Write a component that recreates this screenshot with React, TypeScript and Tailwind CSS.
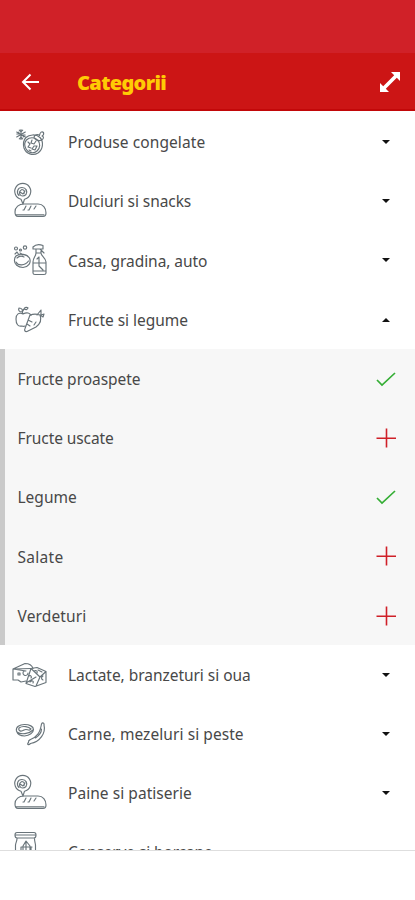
import { useState, type ReactNode } from 'react';

type Sub = { name: string; added: boolean; tracking: string };
type Category = { name: string; icon: ReactNode; tracking: string; subs?: Sub[] };

const Drawing = ({ children }: { children: ReactNode }) => (
  <svg
    className="w-9 h-9 shrink-0 overflow-visible text-[#69747a]"
    viewBox="0 0 36 36"
    fill="none"
    stroke="currentColor"
    strokeWidth="1.15"
    strokeLinecap="round"
    strokeLinejoin="round"
  >
    {children}
  </svg>
);

const FrozenIcon = () => (
  <Drawing>
    <path d="M9 5.5v10M4.7 8l8.6 5M13.3 8l-8.6 5M7.3 6.2 9 7.8l1.7-1.6M7.3 14.8 9 13.2l1.7 1.6M4.8 10h2v-2M13.2 11h-2v2" />
    <path d="M14 13.5c3-3 10-3.8 14 0 4 4.5 3 12-2 15.500-5 3-12 1-14-5-1-4-.5-8 2-10.500Z" />
    <path d="M14.500 16c3-3 8-3 11 0s3 8-.5 11-9 2-11-2-1.500-7 .5-9ZM22 14c0-4 4-4 5.500-2.500C28 8 30 7 31.500 8.500c.5 2 0 3-1.500 3.500 2 .5 2 3-.5 4-2 1-5 .5-7.500-2Z" />
    <path d="m16 18 2 2-2 3 3 1M20 16l-1 3 3 1 2-3M22 22l-2 3 3 1 2-4-3 0M17 26l2 1" />
  </Drawing>
);

const BakeryIcon = () => (
  <Drawing>
    <path d="M9 16.200a8 8 0 1 1 3.500 0L11 21l-2-4.800Z" />
    <path d="M7 12.500c-3-3-1.500-8 3-8 4 0 6 4 4 7-2 2-5 2-6 0s0-4 2-5c2 0 3 2 2 4M8 9l3 2 2-3" />
    <path d="M3 29c0-5 4-8 9-8h14c5 0 8 4 8 9 0 2-1 3.500-3 3.500H6c-2 0-3-1.500-3-4.500ZM4 31.800h28" />
    <path d="m12 27 2-4M17 27l2-4M22 26l2-3M11 27h1M16 27h1" />
  </Drawing>
);

const CleaningIcon = () => (
  <Drawing>
    <circle cx="4" cy="6.500" r="1.500" />
    <circle cx="8.500" cy="8" r="1" />
    <circle cx="13" cy="5.500" r="1.700" />
    <path d="M4 14c4-3 11-2 13.500 2 2 5-1 9-6.500 9.500C6 25.500 2 22 2.500 18c0-2 .5-3 1.500-4Z" />
    <path d="M4 20c2 4 9 4 12.500-1M5 16c2-2 5-2 7-1M3 12l2-2 2 3M8 11l3 2" />
    <path d="M21 5c2-2 6-3 10-1.500v3.500h-3l4 4M21 5v2h7M24 7v4l5 0V7M24 11c0 3-3 5-3 9v11c0 1 1 1.500 2 1.500h9c1 0 2-.5 2-1.500V20c0-4-5-6-5-9M21 21h13M21 29h13M25 17l2-2v9l4 4" />
  </Drawing>
);

const FruitIcon = () => (
  <Drawing>
    <path d="M13 24c-1 .5-2 .5-3 0-4 1-6-2-6-7s3-7 7-5c4-2 7-1 8 1.500M11 12c-1-2 0-4 1-5M10 10C7 10 6 8 7 6c3 0 4 2 3 4ZM12 7c1-2 3-2 4-1-1 2-2 2-4 1" />
    <path d="M18 13c3-1 7-1 10 0 2 5 0 9-4 12l-9 4.500c-2 .5-3-1-2-3L18 13ZM25 13l4-5v5l3-1-1 3-3-2M16 18l4 2M15 22l3 2M24 20l-2 3" />
  </Drawing>
);

const DairyIcon = () => (
  <Drawing>
    <path d="m1 12 12-5.500c4 0 7 2 8 5M1 12l18-.5M1 12v11h5l3 2 5-1M1 12l13 2M6 16h2v2H6zM12 14a2.500 2.500 0 1 0 4 2" />
    <path d="m19 11.500 6-1 9 4v11l-11 4-9-3 5-15ZM19 11.500 28 20l6-5.500M28 20l-4 9M14 26l10-6M22 14c2-1 4 0 3 2M17 19c2-1 3 1 2 2M31 19c-2 1-2 3 0 4M18 25c2-2 4-1 3 1M26 13l4 2" />
  </Drawing>
);

const MeatIcon = () => (
  <Drawing>
    <path d="M4.500 15c-1-4 3-6.500 8-6.500s9 2 9 5-4 6-9 6.500c-5 0-7-2-8-5ZM7 12c4-3 10-1 12 1-2 3-4-1-7 1-3 2-6 1-5-2ZM5 16c4 3 12 2 16-2" />
    <path d="M29.500 8c1-2 3-1 2.500 1 2 8-4 17-13.500 18.500-2 2-4 1-2-1-.5-2 1-2.500 2-3C25 21 28 17 29.500 8ZM29.500 13c0 4-3 7-6 9" />
  </Drawing>
);

const JarIcon = () => (
  <Drawing>
    <path d="M5-1.500h17c1.500 0 2 1 2 2.500s-.5 3-2 3H5c-1.500 0-2-1.500-2-3s.5-2.500 2-2.500ZM4 1h19M5 4.500C5 7 4 8 3.500 11v19h20V11C23 8 22.500 7 22.500 4.500M9 13h11M11 17v-5l3-5 4 5v5M14 7v10M9 13v5M19 13v5" />
  </Drawing>
);

const categories: Category[] = [
  { name: 'Produse congelate', icon: <FrozenIcon />, tracking: 'tracking-[0.08px]' },
  { name: 'Dulciuri si snacks', icon: <BakeryIcon />, tracking: 'tracking-[-0.08px]' },
  { name: 'Casa, gradina, auto', icon: <CleaningIcon />, tracking: 'tracking-[-0.05px]' },
  {
    name: 'Fructe si legume',
    icon: <FruitIcon />,
    tracking: 'tracking-[-0.02px]',
    subs: [
      { name: 'Fructe proaspete', added: true, tracking: 'tracking-[-0.03px]' },
      { name: 'Fructe uscate', added: false, tracking: 'tracking-[-0.08px]' },
      { name: 'Legume', added: true, tracking: 'tracking-[0px]' },
      { name: 'Salate', added: false, tracking: 'tracking-[0.3px]' },
      { name: 'Verdeturi', added: false, tracking: 'tracking-[0.15px]' },
    ],
  },
  { name: 'Lactate, branzeturi si oua', icon: <DairyIcon />, tracking: 'tracking-[-0.04px]' },
  { name: 'Carne, mezeluri si peste', icon: <MeatIcon />, tracking: 'tracking-[0.07px]' },
  { name: 'Paine si patiserie', icon: <BakeryIcon />, tracking: 'tracking-[0.05px]' },
  { name: 'Conserve si borcane', icon: <JarIcon />, tracking: 'tracking-[-0.12px]' },
];

export default function App() {
  const [open, setOpen] = useState<string | null>('Fructe si legume');

  return (
    <div className="flex h-[900px] w-full flex-col overflow-hidden bg-white font-['Noto_Sans',sans-serif] text-[15.5px] text-[#484848]">
      <div className="h-[53px] shrink-0 bg-[#d02128]" />
      <header className="flex h-[58px] shrink-0 items-center border-b-2 border-[#c20809] bg-[#cc1515] pt-0.5 pl-[21px] pr-[15px]">
        <button aria-label="Inapoi">
          <svg className="h-[18px] w-[19px]" viewBox="0 0 19 18" fill="none" stroke="#fff" strokeWidth="2">
            <path d="M18 9H2M9.500 1.500 2 9l7.500 7.500" />
          </svg>
        </button>
        <h1 className="ml-[37px] pt-px text-[20px] leading-none font-black tracking-[-0.65px] text-[#ffcb05]">Categorii</h1>
        <button className="ml-auto" aria-label="Extinde">
          <svg className="h-5 w-5" viewBox="0 0 20 20" fill="#fff">
            <path d="M11 0h9v9l-3.200-3.200L5.800 16.800 9 20H0v-9l3.200 3.200L14.200 3.200z" />
          </svg>
        </button>
      </header>

      <main className="mt-[1.5px] h-[737.5px] shrink-0 overflow-hidden">
        {categories.map((cat) => (
          <div key={cat.name}>
            <button
              className="flex h-[59.2px] w-full items-center pl-3 pr-[25px] text-left"
              onClick={() => setOpen(open === cat.name ? null : cat.name)}
            >
              {cat.icon}
              <span className={`ml-5 pt-[1.5px] whitespace-nowrap ${cat.tracking}`}>{cat.name}</span>
              <svg
                className={`ml-auto h-1 w-2 ${open === cat.name ? 'rotate-180' : ''}`}
                viewBox="0 0 8 4"
                fill="#111"
              >
                <path d="M0 0h8L4 4z" />
              </svg>
            </button>
            {open === cat.name && cat.subs && (
              <div className="border-l-[5px] border-[#cacaca] bg-[#f7f7f7]">
                {cat.subs.map((sub) => (
                  <div key={sub.name} className="flex h-[59.2px] items-center justify-between pl-[12.5px] pr-[19px]">
                    <span className={`pt-[1.5px] ${sub.tracking}`}>{sub.name}</span>
                    {sub.added ? (
                      <svg className="h-5 w-5" viewBox="0 0 20 20" fill="none" stroke="#35ae35" strokeWidth="1.7">
                        <path d="m1 11 5 5L19 4" />
                      </svg>
                    ) : (
                      <svg className="h-5 w-5" viewBox="0 0 20 20" fill="none" stroke="#cf2028" strokeWidth="1.6">
                        <path d="M10.500 .5v19M.5 10.300h20" />
                      </svg>
                    )}
                  </div>
                ))}
              </div>
            )}
          </div>
        ))}
      </main>
      <footer className="grow border-t border-[#dedede] bg-white" />
    </div>
  );
}
